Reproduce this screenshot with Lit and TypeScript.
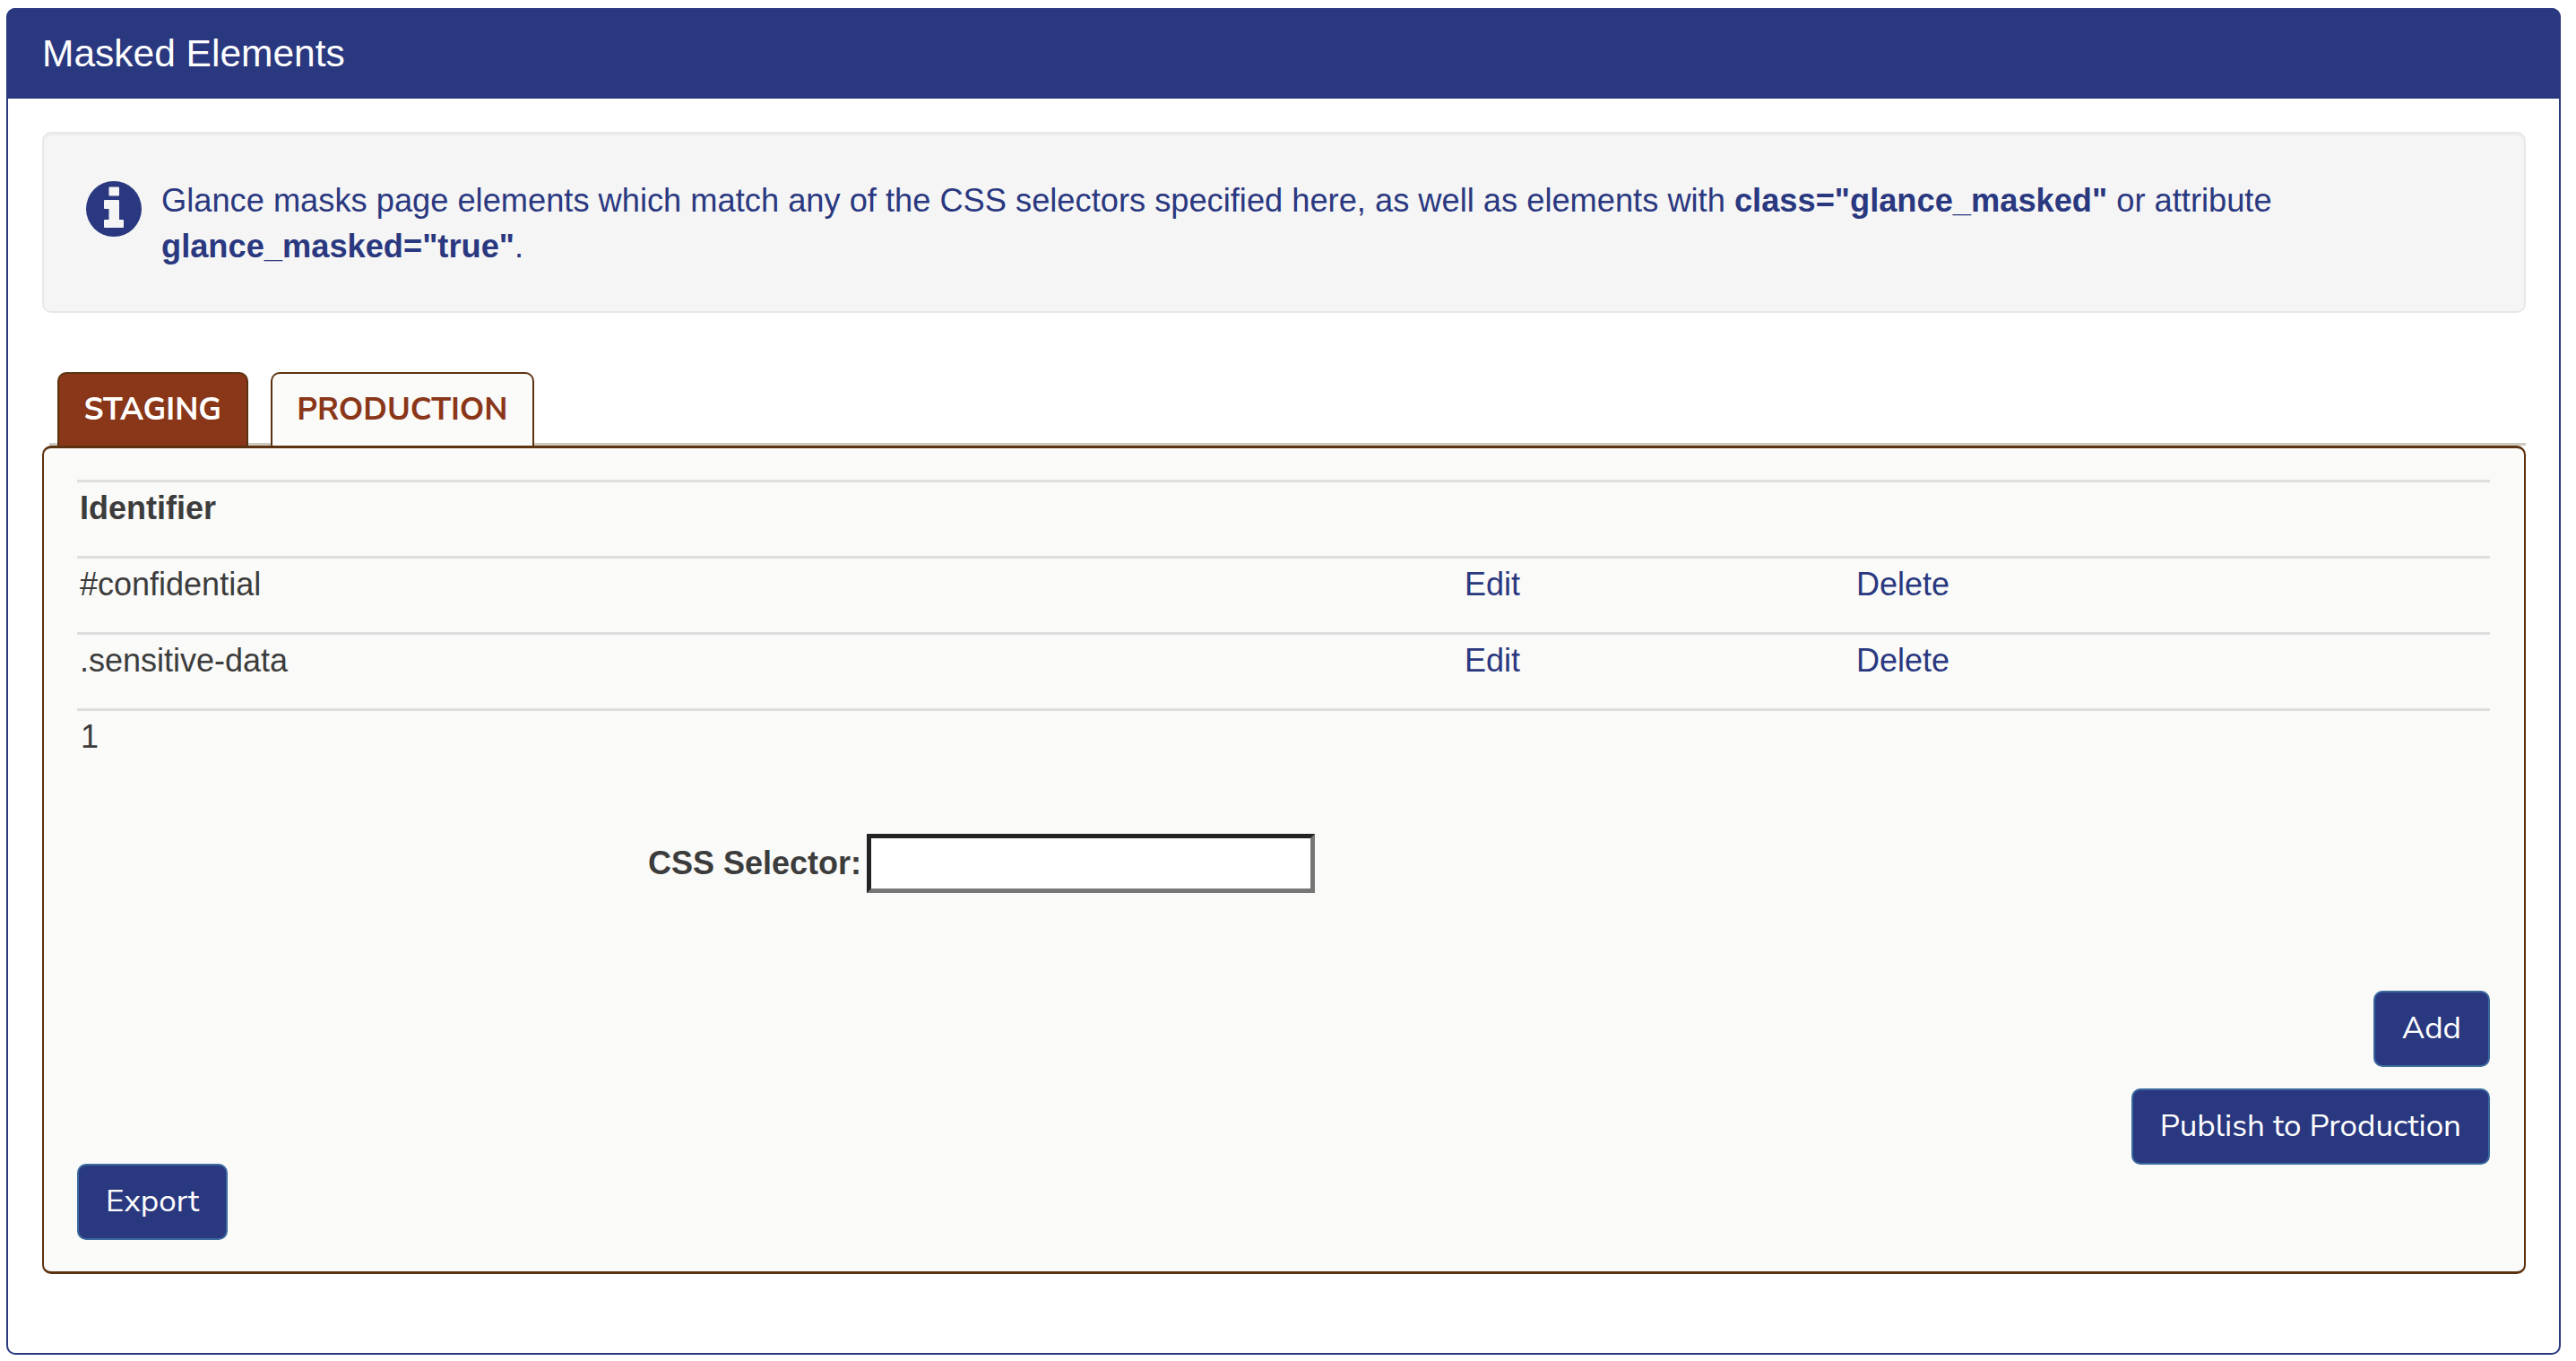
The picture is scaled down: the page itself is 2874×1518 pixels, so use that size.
import { LitElement, html, css, svg } from "lit";
import { customElement } from "lit/decorators.js";

const infoIcon = svg`<svg viewBox="0 0 62 62" width="62" height="62" aria-hidden="true"><path fill="#2a3880" fill-rule="evenodd" d="M31 0a31 31 0 1 0 0 62a31 31 0 1 0 0-62ZM26.500 6.500h9.500a1 1 0 0 1 1 1v8a1 1 0 0 1-1 1h-9.500a1 1 0 0 1-1-1v-8a1 1 0 0 1 1-1ZM21 21h15a1 1 0 0 1 1 1v21h4a1 1 0 0 1 1 1v7a1 1 0 0 1-1 1H21a1 1 0 0 1-1-1v-7a1 1 0 0 1 1-1h4.500V31H21a1 1 0 0 1-1-1v-8a1 1 0 0 1 1-1Z"/></svg>`;

@customElement("app-root")
export class AppRoot extends LitElement {
  static styles = css`
    :host { display: block; font-family: "Liberation Sans", Arial, sans-serif; color: #3c3c3c; }
    * { box-sizing: border-box; }
    .page { padding: 9px 17px 7px 7px; }
    .card { height: 1502px; border: 2px solid #2a3880; border-radius: 10px; background: #fff; }
    .head { margin: -2px -2px 0; height: 101px; background: #2a3880; border-radius: 10px 10px 0 0; color: #fff; font-size: 42.5px; line-height: 101px; padding-left: 40px; }
    .body { padding: 37px 37px 0 38px; }
    .notice { display: flex; gap: 22px; height: 202px; padding: 53px 40px 0 47px; background: #f5f5f5; border: 2px solid #e8e8e8; border-radius: 10px; box-shadow: inset 0 2px 2px rgba(0,0,0,.04); color: #2a3880; font-size: 36.25px; line-height: 51.4px; }
    .notice svg { flex: none; }
    .notice p { margin: -4px 0 0; }
    .tabs { display: flex; gap: 25px; margin: 66px 0 0 8px; padding-left: 9px; height: 82px; border-bottom: 3px solid #cfcabf; }
    .tab { height: 82px; padding: 0 27.5px; border: 2px solid #5c3311; border-bottom: 0; border-radius: 10px 10px 0 0; font-family: "Nunito Sans", Nunito, Lato, sans-serif; font-size: 35px; font-weight: 700; line-height: 80px; }
    .tab.on { background: #8a3618; color: #fff; }
    .tab.off { background: #fafaf8; color: #8a3618; }
    .panel { height: 924px; padding: 35px 0 0 37px; background: #fafaf8; border-style: solid; border-color: #5c3311; border-width: 3px 2px 3px 2px; border-radius: 10px; }
    .inner { width: 2692px; }
    .row { display: grid; grid-template-columns: 1545px 437px 1fr; height: 85px; border-top: 3px solid #dedede; padding: 3px 0 0 3px; font-size: 36px; line-height: 51.4px; }
    .row b { font-weight: 700; }
    .row a { color: #2a3880; text-decoration: none; }
    .pager { border-top: 3px solid #dedede; padding: 3px 0 0 4px; height: 85px; font-size: 36px; line-height: 51.4px; }
    .form { display: flex; align-items: center; margin: 55px 0 0 637px; gap: 6px; }
    .form label { font-size: 36px; font-weight: 700; line-height: 51.4px; }
    .field { width: 500px; height: 66px; border-style: solid; border-width: 5px; border-color: #222 #767676 #767676 #222; background: #fff; padding: 0; }
    .actions { display: flex; flex-direction: column; align-items: flex-end; }
    .btn { display: block; height: 85px; padding: 0 30px; background: #2a3880; color: #fff; border: 2px solid #3a6a9e; border-radius: 10px; font-family: "Nunito Sans", Nunito, Lato, sans-serif; font-size: 35px; line-height: 80px; }
    .add { margin-top: 109px; }
    .pub { margin-top: 24px; }
    .export { margin: -1px 0 0; width: fit-content; }
  `;

  render() {
    return html`
      <div class="page">
        <div class="card">
          <div class="head">Masked Elements</div>
          <div class="body">
            <div class="notice">
              ${infoIcon}
              <p>Glance masks page elements which match any of the CSS selectors specified here, as well as elements with <b>class="glance_masked"</b> or attribute<br /><b>glance_masked="true"</b>.</p>
            </div>
            <div class="tabs">
              <div class="tab on">STAGING</div>
              <div class="tab off">PRODUCTION</div>
            </div>
            <div class="panel">
              <div class="inner">
                <div class="row"><b>Identifier</b></div>
                <div class="row"><span>#confidential</span><a>Edit</a><a>Delete</a></div>
                <div class="row"><span>.sensitive-data</span><a>Edit</a><a>Delete</a></div>
                <div class="pager">1</div>
                <div class="form"><label>CSS Selector:</label><input class="field" type="text" /></div>
                <div class="actions">
                  <div class="btn add">Add</div>
                  <div class="btn pub">Publish to Production</div>
                </div>
                <div class="btn export">Export</div>
              </div>
            </div>
          </div>
        </div>
      </div>
    `;
  }
}
